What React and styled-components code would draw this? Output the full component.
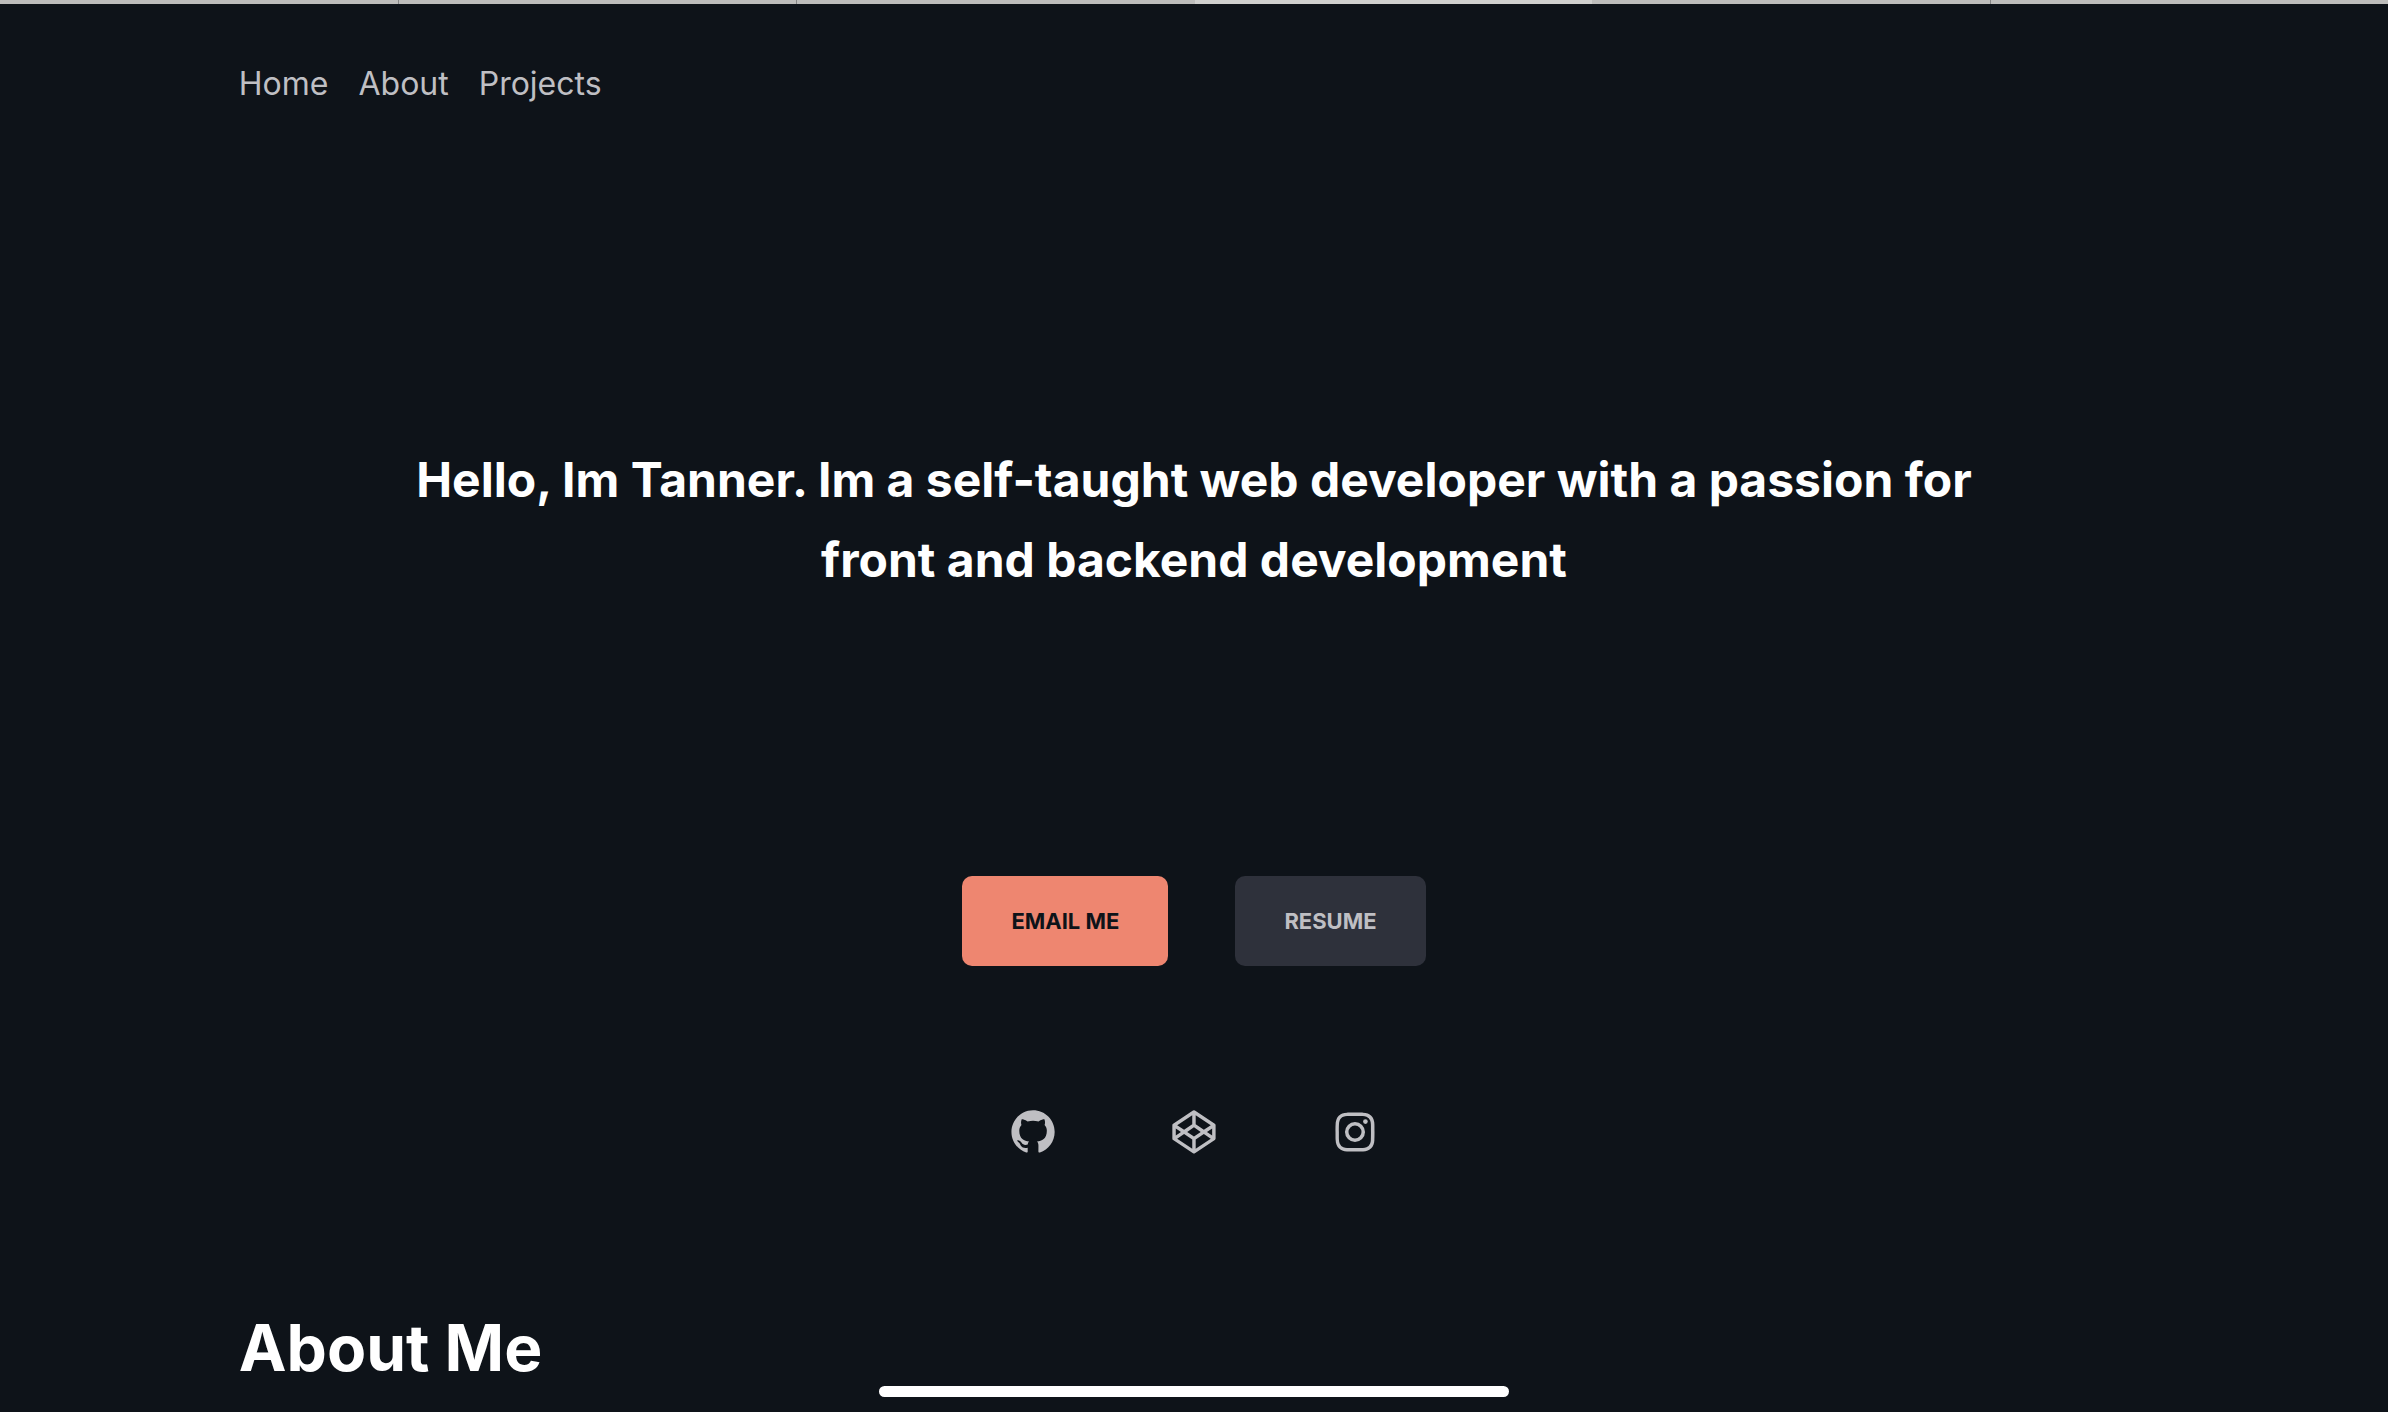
import React from "react";
import styled, { createGlobalStyle } from "styled-components";
import { BiLogoGithub, BiLogoCodepen, BiLogoInstagram } from "react-icons/bi";

const GlobalStyle = createGlobalStyle`
  *, *::before, *::after { box-sizing: border-box; }
  body {
    margin: 0;
    background: #0e1319;
    color: #fff;
    font-family: Inter, "Liberation Sans", sans-serif;
    overflow: hidden;
  }
`;

const Page = styled.div`
  display: flex;
  flex-direction: column;
  height: 100vh;
  overflow: hidden;
`;

const TabStrip = styled.div`
  display: flex;
  flex: none;
  height: 4px;
`;

const TabEdge = styled.span`
  flex: 1;
  background: ${({ $active }) => ($active ? "#d0d0ce" : "#bdbdbb")};
  border-right: ${({ $divider }) => ($divider ? "1px solid #858585" : "0")};
`;

const Container = styled.div`
  width: 80%;
  margin: 0 auto;
`;

const Nav = styled.nav`
  display: flex;
  gap: 30px;
  padding-top: 56px;
`;

const NavLink = styled.a`
  color: #bfbfc3;
  font-size: 32px;
  font-weight: 400;
  line-height: 48px;
  text-decoration: none;
`;

const Hero = styled.main`
  display: flex;
  flex-direction: column;
  align-items: center;
  padding-top: 332px;
`;

const Headline = styled.h1`
  max-width: 1600px;
  margin: 0;
  font-size: 48px;
  font-weight: 700;
  line-height: 80px;
  text-align: center;
`;

const Actions = styled.div`
  display: flex;
  gap: 67px;
  padding-top: 276px;
`;

const Button = styled.button`
  height: 90px;
  padding: 0 49px;
  border: 0;
  border-radius: 10px;
  background: ${({ $primary }) => ($primary ? "#ee8670" : "#2e313b")};
  color: ${({ $primary }) => ($primary ? "#0e1319" : "#bfbfc3")};
  font-family: inherit;
  font-size: 22px;
  font-weight: 700;
  text-transform: uppercase;
`;

const Socials = styled.div`
  display: flex;
  gap: 109px;
  padding-top: 140px;
`;

const SocialLink = styled.a`
  display: flex;
  color: #bfbfc3;
  font-size: 52px;
`;

const SectionTitle = styled.h2`
  margin: 0;
  padding-top: 150px;
  font-size: 64px;
  font-weight: 700;
  line-height: 80px;
`;

const HomeIndicator = styled.div`
  position: fixed;
  bottom: 15px;
  left: 50%;
  width: 630px;
  height: 11px;
  border-radius: 6px;
  background: #fff;
  transform: translateX(-50%);
`;

const tabs = [
  { divider: true },
  { divider: true },
  {},
  { active: true },
  { divider: true },
  {},
];
const links = ["Home", "About", "Projects"];
const socials = [
  { label: "GitHub", Icon: BiLogoGithub },
  { label: "CodePen", Icon: BiLogoCodepen },
  { label: "Instagram", Icon: BiLogoInstagram },
];

export default function App() {
  return (
    <Page>
      <GlobalStyle />
      <TabStrip>
        {tabs.map(({ active, divider }, i) => (
          <TabEdge key={i} $active={active} $divider={divider} />
        ))}
      </TabStrip>
      <Container>
        <Nav>
          {links.map((link) => (
            <NavLink key={link} href={`#${link.toLowerCase()}`}>{link}</NavLink>
          ))}
        </Nav>
        <Hero>
          <Headline>
            Hello, Im Tanner. Im a self-taught web developer with a passion for front and backend development
          </Headline>
          <Actions>
            <Button type="button" $primary>Email me</Button>
            <Button type="button">Resume</Button>
          </Actions>
          <Socials>
            {socials.map(({ label, Icon }) => (
              <SocialLink key={label} href={`#${label.toLowerCase()}`} aria-label={label}>
                <Icon />
              </SocialLink>
            ))}
          </Socials>
        </Hero>
        <SectionTitle id="about">About Me</SectionTitle>
      </Container>
      <HomeIndicator />
    </Page>
  );
}
